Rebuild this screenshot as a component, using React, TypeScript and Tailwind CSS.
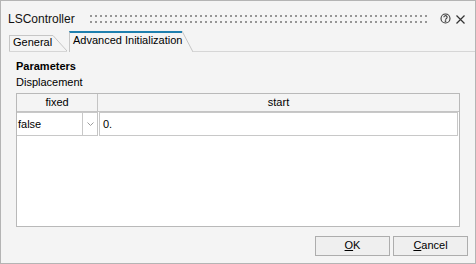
export default function App() {
  return (
    <div className="w-[476px] h-[264px] bg-[#f4f4f4] border border-[#b4b4b4] flex flex-col text-[11px] text-black font-['Liberation_Sans',Arial,sans-serif] overflow-hidden">
      {/* title bar */}
      <div className="h-[30px] shrink-0 flex items-start pl-[7px]">
        <span className="w-[82px] shrink-0 mt-[12px] text-[12px] leading-[13px] text-[#111]">LSController</span>
        <svg className="mt-[14px] shrink-0" width="338" height="8">
          <defs>
            <pattern id="grip" width="5" height="6" patternUnits="userSpaceOnUse">
              <rect width="2" height="2" fill="#969696" />
            </pattern>
          </defs>
          <rect width="338" height="8" fill="url(#grip)" />
        </svg>
        <svg className="mt-[12px] ml-[12px] shrink-0" width="11" height="11" viewBox="0 0 11 11" fill="none" stroke="#3a3a3a" strokeWidth="1.1">
          <circle cx="5.5" cy="5.5" r="4.5" />
          <path d="M3.9 4.3a1.6 1.6 0 1 1 2.3 1.4c-.5.3-.7.5-.7 1.1" />
          <circle cx="5.5" cy="8.1" r="0.35" fill="#3a3a3a" />
        </svg>
        <svg className="mt-[14px] ml-[5px] shrink-0" width="9" height="9" viewBox="0 0 9 9" stroke="#333" strokeWidth="1.2">
          <path d="M0.5 0.5 L8.5 8.5 M8.5 0.5 L0.5 8.5" />
        </svg>
      </div>

      {/* tabs */}
      <div className="h-[21px] shrink-0 flex items-end">
        <div className="w-[8px] shrink-0" />
        <div className="flex shrink-0 border-b border-[#d6d6d6]">
          <div className="h-[16px] w-[44px] border-l border-t border-[#c6c6c6] pl-[3px] leading-[12px]">General</div>
          <svg width="14" height="16" className="shrink-0">
            <line x1="0" y1="0.5" x2="14" y2="16" stroke="#c6c6c6" strokeWidth="1" />
          </svg>
        </div>
        <div className="flex shrink-0 ml-[2px]">
          <div className="h-[21px] w-[113px] border-l border-[#c6c6c6] border-t-2 border-t-[#1e7fae] pl-[3px] leading-[15px] whitespace-nowrap">
            Advanced Initialization
          </div>
          <svg width="11" height="21" className="shrink-0">
            <line x1="0" y1="0" x2="11" y2="21" stroke="#c6c6c6" strokeWidth="1" />
          </svg>
        </div>
        <div className="flex-1 border-b border-[#d6d6d6]" />
      </div>

      {/* panel */}
      <div className="flex flex-col px-[15px]">
        <div className="mt-[8px] font-bold leading-[13px]">Parameters</div>
        <div className="mt-[3px] leading-[13px]">Displacement</div>
        <div className="mt-[4px] w-[444px] h-[134px] border border-[#b9b9b9] bg-white flex flex-col">
          <div className="h-[18px] shrink-0 flex bg-[#f4f4f4] border-b border-[#c4c4c4]">
            <div className="w-[81px] border-r border-[#c4c4c4] text-center leading-[17px]">fixed</div>
            <div className="flex-1 text-center leading-[17px]">start</div>
          </div>
          <div className="h-[24px] shrink-0 flex">
            <div className="w-[81px] flex border-r border-[#c4c4c4]">
              <div className="w-[66px] border-y border-r border-[#c8c8c8] pl-[1px] leading-[22px]">false</div>
              <div className="flex-1 border-y border-[#c8c8c8] flex items-center justify-center">
                <svg width="7" height="4" viewBox="0 0 7 4" fill="none" stroke="#9c9c9c" strokeWidth="1">
                  <path d="M0.5 0.5 L3.5 3.5 L6.5 0.5" />
                </svg>
              </div>
            </div>
            <div className="flex-1 ml-[1px] mr-[1px] border border-[#c8c8c8] pl-[3px] leading-[22px]">0.</div>
          </div>
        </div>
      </div>

      {/* buttons */}
      <div className="mt-[9px] flex justify-end gap-[3px] pr-[7px]">
        <button className="w-[75px] h-[20px] border border-[#adadad] bg-[#efefef] flex items-start justify-center leading-[16px]">
          <span><span className="underline">O</span>K</span>
        </button>
        <button className="w-[75px] h-[20px] border border-[#adadad] bg-[#efefef] flex items-start justify-center leading-[16px]">
          <span><span className="underline">C</span>ancel</span>
        </button>
      </div>
    </div>
  )
}
